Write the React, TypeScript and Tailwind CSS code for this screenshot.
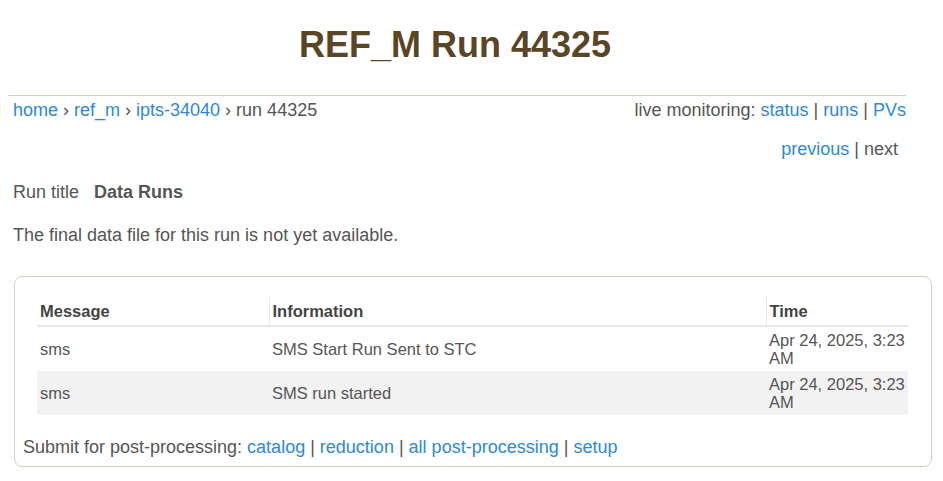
const events = [
  { message: "sms", info: "SMS Start Run Sent to STC", time: "Apr 24, 2025, 3:23 AM" },
  { message: "sms", info: "SMS run started", time: "Apr 24, 2025, 3:23 AM" },
];

const Link = ({ children }: { children: React.ReactNode }) => (
  <a href="#" className="text-[#2c89d8] no-underline">
    {children}
  </a>
);

export default function App() {
  return (
    <div className="min-h-[481px] bg-white font-['Liberation_Sans',Arial,sans-serif] text-[18px] leading-[20px] text-[#555]">
      <h1 className="w-[910px] pt-[24px] text-center text-[36px] font-bold leading-[41px] text-[#5a4526]">
        REF_M Run 44325
      </h1>

      <div className="ml-[8px] mt-[30px] w-[898px] border-t border-[#d8ccbe]">
        <div className="flex justify-between pl-[5px] pt-[4px]">
          <div>
            <Link>home</Link> › <Link>ref_m</Link> › <Link>ipts-34040</Link> › run 44325
          </div>
          <div>
            live monitoring: <Link>status</Link> | <Link>runs</Link> | <Link>PVs</Link>
          </div>
        </div>
        <div className="mt-[19px] pr-[8px] text-right">
          <Link>previous</Link> | next
        </div>
      </div>

      <div className="ml-[13px] mt-[23px] flex gap-[15px]">
        <span>Run title</span>
        <span className="font-bold">Data Runs</span>
      </div>

      <p className="ml-[13px] mt-[23px]">The final data file for this run is not yet available.</p>

      <div className="ml-[14px] mt-[31px] w-[918px] rounded-[8px] border border-[#d8ccbe] px-[8px] pb-[9px] pt-[20px]">
        <table className="ml-[14px] w-[871px] border-collapse text-[16.5px] leading-[18px]">
          <thead>
            <tr className="border-b-2 border-[#e6e6e6] text-left text-[#444]">
              <th className="w-[232px] px-[3px] pb-[5px] pt-[5px] font-bold">Message</th>
              <th className="w-[497px] border-l border-[#e6e6e6] px-[3px] pb-[5px] pt-[5px] font-bold">
                Information
              </th>
              <th className="border-l border-[#e6e6e6] px-[3px] pb-[5px] pt-[5px] font-bold">Time</th>
            </tr>
          </thead>
          <tbody>
            {events.map((ev, i) => (
              <tr key={i} className={i % 2 === 1 ? "bg-[#f2f2f2]" : ""}>
                <td className="px-[3px] py-[4px] align-middle">{ev.message}</td>
                <td className="px-[3px] py-[4px] align-middle">{ev.info}</td>
                <td className="px-[3px] py-[4px] align-middle">{ev.time}</td>
              </tr>
            ))}
          </tbody>
        </table>
        <div className="mt-[22px]">
          Submit for post-processing: <Link>catalog</Link> | <Link>reduction</Link> |{" "}
          <Link>all post-processing</Link> | <Link>setup</Link>
        </div>
      </div>
    </div>
  );
}
